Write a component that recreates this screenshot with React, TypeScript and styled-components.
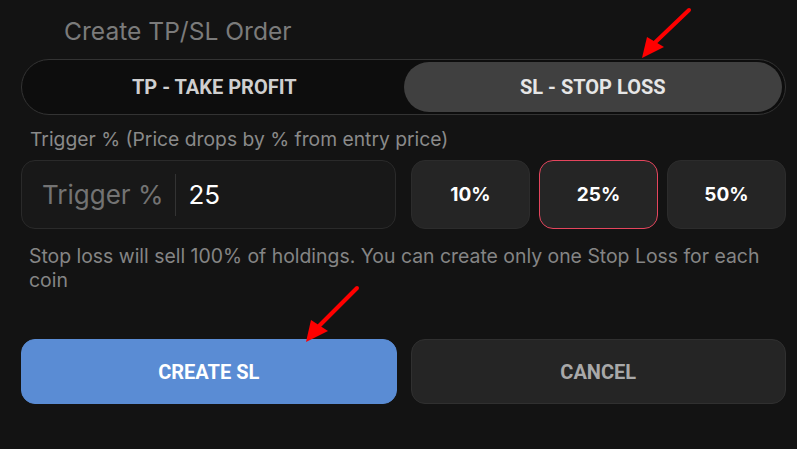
import React, { useState } from 'react'
import styled, { createGlobalStyle } from 'styled-components'

const GlobalStyle = createGlobalStyle`
	html, body {
		margin: 0;
		padding: 0;
		background: #131313;
	}
	body {
		font-family: "Inter", "Noto Sans", sans-serif;
	}
`

const Page = styled.div`
	position: relative;
	width: 797px;
	height: 449px;
	box-sizing: border-box;
	padding: 17px 11px 0 21px;
	background: #131313;
	overflow: hidden;
`

const Title = styled.h2`
	margin: 0 0 13px 43px;
	font-size: 24.6px;
	line-height: 29px;
	font-weight: 400;
	color: #7b7b7b;
`

const Tabs = styled.div`
	display: grid;
	grid-template-columns: 1fr 1fr;
	padding: 2px 3px;
	height: 56px;
	box-sizing: border-box;
	border: 1px solid #333;
	border-radius: 28px;
	background: #0d0d0d;
`

const Tab = styled.button<{ $active?: boolean }>`
	border: 0;
	border-radius: 25px;
	background: ${p => (p.$active ? '#404040' : 'transparent')};
	color: ${p => (p.$active ? '#e6e6e6' : '#cfcfcf')};
	font-family: "Roboto", sans-serif;
	font-size: 20px;
	font-weight: 700;
	cursor: pointer;
`

const Label = styled.div`
	margin: 13px 0 0 9px;
	font-size: 19.3px;
	line-height: 23px;
	color: #8a8a8a;
`

const Row = styled.div`
	display: grid;
	grid-template-columns: 1fr 1fr;
	gap: 15px;
	margin-top: 9px;
	height: 69px;
`

const InputBox = styled.div`
	display: flex;
	align-items: center;
	box-sizing: border-box;
	border: 1px solid #2a2a2a;
	border-radius: 14px;
	background: #181818;
	padding-left: 20px;
`

const InputLabel = styled.span`
	font-size: 26px;
	color: #737373;
	padding-right: 12px;
	height: 42px;
	line-height: 42px;
	border-right: 1px solid #333;
`

const InputValue = styled.span`
	margin-left: 12px;
	font-size: 26px;
	color: #fff;
`

const Presets = styled.div`
	display: grid;
	grid-template-columns: repeat(3, 1fr);
	gap: 9px;
`

const Preset = styled.button<{ $selected?: boolean }>`
	box-sizing: border-box;
	border: 1px solid ${p => (p.$selected ? '#e5455d' : '#2c2c2c')};
	border-radius: 14px;
	background: #252525;
	color: #fff;
	font-family: "Inter", sans-serif;
	font-size: 19px;
	font-weight: 700;
	cursor: pointer;
`

const Note = styled.p`
	margin: 15px 0 0 8px;
	font-size: 19.4px;
	line-height: 24px;
	color: #858585;
`

const Actions = styled.div`
	display: grid;
	grid-template-columns: 1fr 1fr;
	gap: 14px;
	margin-top: 47px;
	height: 65px;
`

const ActionButton = styled.button<{ $primary?: boolean }>`
	box-sizing: border-box;
	border: 1px solid ${p => (p.$primary ? '#5a8cd4' : '#303030')};
	border-radius: 14px;
	background: ${p => (p.$primary ? '#5a8cd4' : '#252525')};
	color: ${p => (p.$primary ? '#fff' : '#a9a9a9')};
	font-family: "Roboto", sans-serif;
	font-size: 20px;
	font-weight: 700;
	cursor: pointer;
`

const Overlay = styled.svg`
	position: absolute;
	left: 0;
	top: 0;
	pointer-events: none;
`

const Arrow: React.FC<{ tail: [number, number], tip: [number, number], a: [number, number], b: [number, number] }> = ({ tail, tip, a, b }) => (
	<g>
		<line x1={tail[0]} y1={tail[1]} x2={(a[0] + b[0]) / 2} y2={(a[1] + b[1]) / 2} stroke="#ff0000" strokeWidth={4} strokeLinecap="round" />
		<polygon points={`${tip[0]},${tip[1]} ${a[0]},${a[1]} ${b[0]},${b[1]}`} fill="#ff0000" />
	</g>
)

export default function App() {
	const [tab, setTab] = useState<'tp' | 'sl'>('sl')
	const [value, setValue] = useState(25)

	return (
		<Page>
			<GlobalStyle />
			<Title>Create TP/SL Order</Title>
			<Tabs>
				<Tab $active={tab === 'tp'} onClick={() => setTab('tp')}>TP - TAKE PROFIT</Tab>
				<Tab $active={tab === 'sl'} onClick={() => setTab('sl')}>SL - STOP LOSS</Tab>
			</Tabs>
			<Label>Trigger % (Price drops by % from entry price)</Label>
			<Row>
				<InputBox>
					<InputLabel>Trigger %</InputLabel>
					<InputValue>{value}</InputValue>
				</InputBox>
				<Presets>
					{[10, 25, 50].map(v => (
						<Preset key={v} $selected={v === value} onClick={() => setValue(v)}>{v}%</Preset>
					))}
				</Presets>
			</Row>
			<Note>Stop loss will sell 100% of holdings. You can create only one Stop Loss for each coin</Note>
			<Actions>
				<ActionButton $primary>CREATE SL</ActionButton>
				<ActionButton>CANCEL</ActionButton>
			</Actions>
			<Overlay width={797} height={449}>
				<Arrow tail={[689, 10]} tip={[642, 58]} a={[647, 37]} b={[664, 47]} />
				<Arrow tail={[357, 288]} tip={[306, 342]} a={[311, 320]} b={[328, 331]} />
			</Overlay>
		</Page>
	)
}
